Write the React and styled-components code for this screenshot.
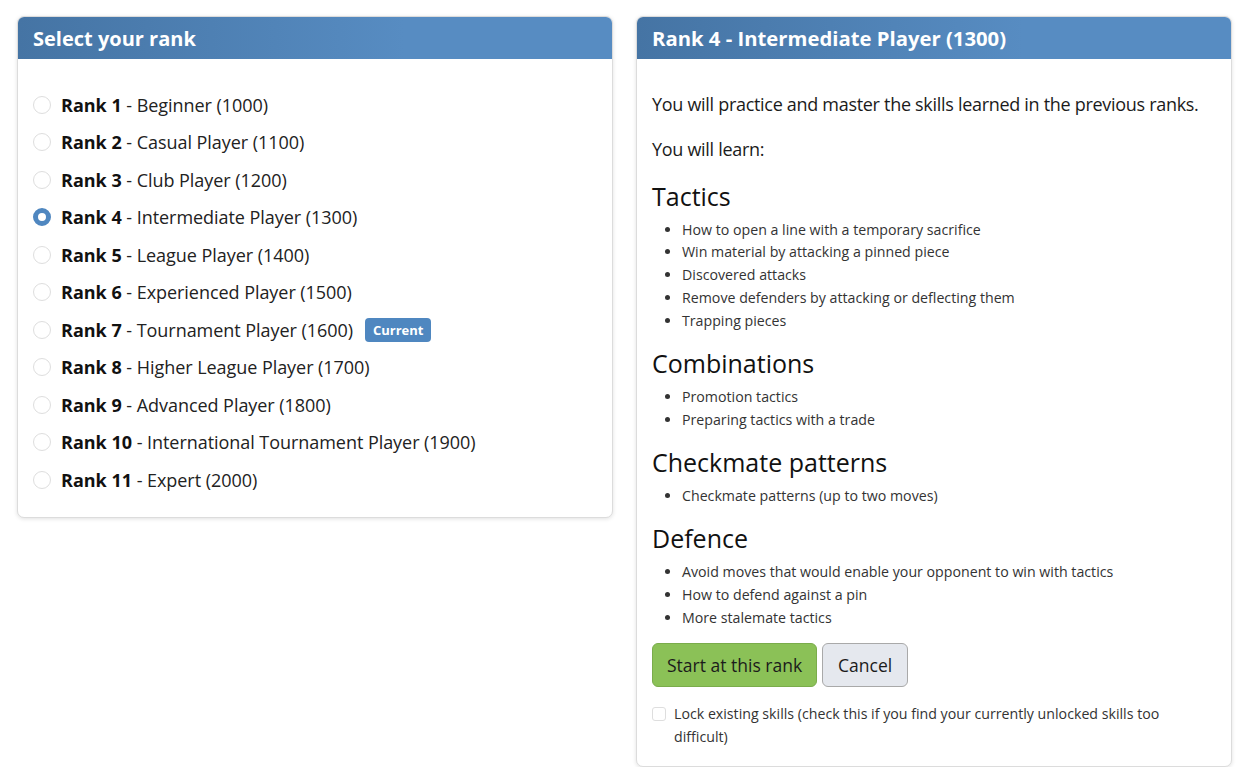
import React, { useState } from "react";
import styled, { createGlobalStyle } from "styled-components";

const Global = createGlobalStyle`
  * { box-sizing: border-box; }
  body { margin: 0; background: #fff; font-family: "Open Sans", "Noto Sans", sans-serif; color: #1b1b1b; }
`;

const Page = styled.div`
  display: grid;
  grid-template-columns: 596px 596px;
  gap: 23px;
  padding: 16px 0 0 17px;
  align-items: start;
`;

const Card = styled.section`
  background: #fff;
  border: 1px solid #dcdcdc;
  border-radius: 7px;
  box-shadow: 0 1px 4px rgba(0, 0, 0, 0.12);
  overflow: hidden;
`;

const CardHeader = styled.h2`
  margin: 0;
  height: 42px;
  display: flex;
  align-items: center;
  padding: 0 15px;
  color: #fff;
  font-size: ${(p) => p.$size || "20px"};
  font-weight: 700;
  background: linear-gradient(to right, #4574a4 0%, #578cc2 65%, #578cc2 100%);
`;

const CardBody = styled.div`
  padding: ${(p) => p.$pad || "27px 15px 18px"};
`;

const RankList = styled.ul`
  list-style: none;
  margin: 0;
  padding: 0;
`;

const RankRow = styled.li`
  display: flex;
  align-items: center;
  height: 37.5px;
  font-size: 18px;
`;

const Radio = styled.span`
  width: 18px;
  height: 18px;
  border-radius: 50%;
  flex: none;
  margin-right: 10px;
  border: ${(p) => (p.$checked ? "5px solid #4f87c0" : "1px solid #dedede")};
  background: #fff;
`;

const RankName = styled.b`
  font-weight: 700;
  color: #111;
`;

const RankDesc = styled.span`
  color: #222;
  white-space: pre;
  letter-spacing: -0.05px;
`;

const Badge = styled.span`
  margin-left: 12px;
  background: #4f87c0;
  color: #fff;
  font-size: 13px;
  font-weight: 700;
  padding: 3px 8px;
  border-radius: 4px;
  line-height: 18px;
`;

const Para = styled.p`
  margin: 0 0 ${(p) => p.$mb || "16px"};
  font-size: 18px;
  line-height: 29px;
  letter-spacing: -0.3px;
`;

const Heading = styled.h3`
  margin: 0 0 6px;
  font-size: 25px;
  font-weight: 500;
  line-height: 34px;
  color: #111;
`;

const Bullets = styled.ul`
  margin: 0 0 13.5px;
  padding-left: 30px;
  font-size: 14.2px;
  line-height: 22.8px;
  color: #333;
`;

const Actions = styled.div`
  display: flex;
  gap: 5px;
  margin-top: 2px;
`;

const Button = styled.button`
  font-family: inherit;
  font-size: 17.5px;
  height: 44px;
  padding: 0 ${(p) => (p.$primary ? "14px" : "15px")};
  border-radius: 6px;
  color: #1b1b1b;
  border: 1px solid ${(p) => (p.$primary ? "#7aac4b" : "#a9a9a9")};
  background: ${(p) => (p.$primary ? "#8bc157" : "#e5e8ee")};
`;

const CheckRow = styled.label`
  display: flex;
  align-items: flex-start;
  gap: 8px;
  margin-top: 15px;
  font-size: 14.2px;
  line-height: 23px;
  color: #333;
`;

const Box = styled.span`
  width: 14px;
  height: 14px;
  margin-top: 5px;
  flex: none;
  border: 1px solid #dedede;
  border-radius: 3px;
  background: #fff;
`;

const ranks = [
  ["Rank 1", "Beginner (1000)"],
  ["Rank 2", "Casual Player (1100)"],
  ["Rank 3", "Club Player (1200)"],
  ["Rank 4", "Intermediate Player (1300)"],
  ["Rank 5", "League Player (1400)"],
  ["Rank 6", "Experienced Player (1500)"],
  ["Rank 7", "Tournament Player (1600)"],
  ["Rank 8", "Higher League Player (1700)"],
  ["Rank 9", "Advanced Player (1800)"],
  ["Rank 10", "International Tournament Player (1900)"],
  ["Rank 11", "Expert (2000)"],
];

const sections = [
  ["Tactics", [
    "How to open a line with a temporary sacrifice",
    "Win material by attacking a pinned piece",
    "Discovered attacks",
    "Remove defenders by attacking or deflecting them",
    "Trapping pieces",
  ]],
  ["Combinations", ["Promotion tactics", "Preparing tactics with a trade"]],
  ["Checkmate patterns", ["Checkmate patterns (up to two moves)"]],
  ["Defence", [
    "Avoid moves that would enable your opponent to win with tactics",
    "How to defend against a pin",
    "More stalemate tactics",
  ]],
];

export default function App() {
  const [sel] = useState(3);
  return (
    <>
      <Global />
      <Page>
        <Card>
          <CardHeader $size="20px">Select your rank</CardHeader>
          <CardBody $pad="27px 15px 18px">
            <RankList>
              {ranks.map(([r, d], i) => (
                <RankRow key={r}>
                  <Radio $checked={i === sel} />
                  <RankName>{r}</RankName>
                  <RankDesc> - {d}</RankDesc>
                  {i === 6 && <Badge>Current</Badge>}
                </RankRow>
              ))}
            </RankList>
          </CardBody>
        </Card>
        <Card>
          <CardHeader $size="20.3px">Rank 4 - Intermediate Player (1300)</CardHeader>
          <CardBody $pad="31px 15px 18px">
            <Para>You will practice and master the skills learned in the previous ranks.</Para>
            <Para $mb="14.5px">You will learn:</Para>
            {sections.map(([h, items]) => (
              <div key={h}>
                <Heading>{h}</Heading>
                <Bullets>
                  {items.map((t) => (
                    <li key={t}>{t}</li>
                  ))}
                </Bullets>
              </div>
            ))}
            <Actions>
              <Button $primary>Start at this rank</Button>
              <Button>Cancel</Button>
            </Actions>
            <CheckRow>
              <Box />
              <span>Lock existing skills (check this if you find your currently unlocked skills too difficult)</span>
            </CheckRow>
          </CardBody>
        </Card>
      </Page>
    </>
  );
}
